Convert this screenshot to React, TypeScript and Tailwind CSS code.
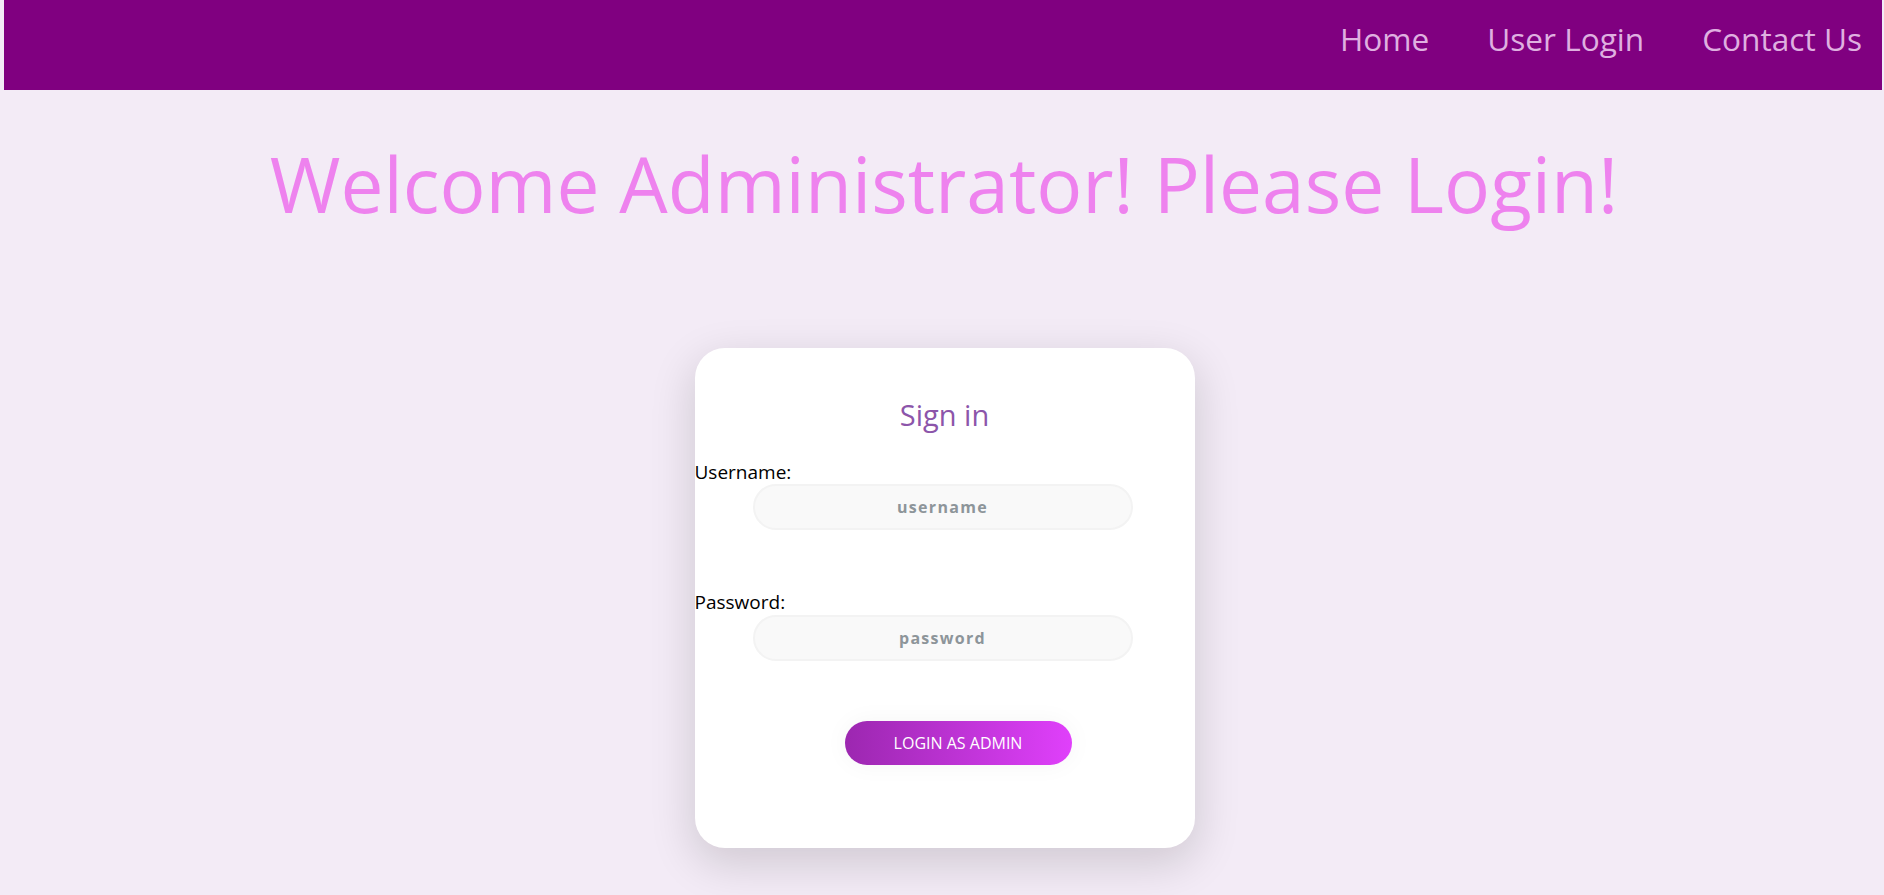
import React from 'react';

const navLinks = ["Home", "User Login", "Contact Us"];

export default function App() {
  return (
    <div className="min-h-screen bg-[#f3ebf6] font-['Open_Sans',sans-serif]">
      {/* top bar */}
      <nav className="ml-[4px] mr-[2px] h-[90px] bg-[#800080] flex justify-end items-start pt-[15px] pr-[20px] gap-[58px]">
        {navLinks.map((link) => (
          <a key={link} href="#" className="text-[31.6px] font-medium text-[#dfb0e0] no-underline">
            {link}
          </a>
        ))}
      </nav>

      <h1 className="mt-[55px] pl-[4px] text-center text-[76.6px] leading-[76px] text-[#ee82ee] font-normal">
        Welcome Administrator! Please Login!
      </h1>

      <div className="pl-[5px] mt-[127px] flex justify-center">
        <div className="w-[500px] h-[500px] bg-white rounded-[30px] shadow-[0_14px_44px_3px_rgba(0,0,0,0.14)] flex flex-col">
          <p className="pt-[49px] text-center text-[29px] leading-[36px] font-medium text-[#8c55aa]">Sign in</p>

          <label className="mt-[28px] text-[19px] leading-[22px] text-black">Username:</label>
          <input
            type="text"
            placeholder="username"
            className="mt-[1px] ml-[58px] w-[380px] h-[46px] rounded-full bg-[#f9f9f9] border-2 border-[#f3f3f3] text-center text-[16px] font-bold tracking-[1.3px] text-[#263238] placeholder:text-[#8d959a] outline-none"
          />

          <label className="mt-[61px] text-[19px] leading-[22px] text-black">Password:</label>
          <input
            type="password"
            placeholder="password"
            className="mt-[2px] ml-[58px] w-[380px] h-[46px] rounded-full bg-[#f9f9f9] border-2 border-[#f3f3f3] text-center text-[16px] font-bold tracking-[1.3px] text-[#263238] placeholder:text-[#8d959a] outline-none"
          />

          <button className="mt-[60px] ml-[150px] w-[227px] h-[44px] rounded-full bg-gradient-to-r from-[#9c27b0] to-[#e040fb] text-white text-[16px] shadow-[0_0_25px_1px_rgba(0,0,0,0.04)]">
            LOGIN AS ADMIN
          </button>
        </div>
      </div>
    </div>
  );
}
